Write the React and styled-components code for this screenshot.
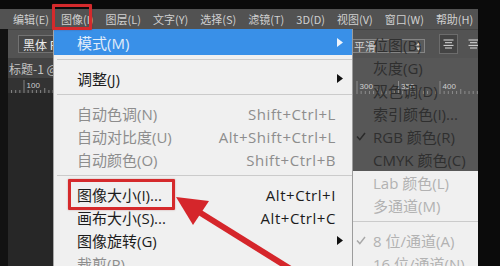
import React from 'react';
import styled, { createGlobalStyle } from 'styled-components';

const GlobalStyle = createGlobalStyle`
  html, body { margin: 0; padding: 0; background: #0b0b0b; }
  body { width: 500px; height: 266px; overflow: hidden; }
  #root { width: 500px; height: 266px; }
`;

const UI_FONT = `"Open Sans", "Noto Sans CJK SC", sans-serif`;
const CJK_FONT = `"Noto Sans CJK SC", sans-serif`;

const Screen = styled.div`
  position: relative;
  width: 500px;
  height: 266px;
  overflow: hidden;
  background: #0b0b0b;
  padding-top: 9px;
  box-sizing: border-box;
  font-family: ${UI_FONT};
`;

const Window = styled.div`
  width: 478px;
  height: 100%;
  display: flex;
  flex-direction: column;
  overflow: hidden;
`;

const MenuBar = styled.div`
  height: 20px;
  flex: none;
  display: flex;
  align-items: center;
  gap: 12px;
  padding-left: 13px;
  background: #525252;
  color: #d0d0d0;
  font-family: ${CJK_FONT};
  font-size: 11px;
  overflow: hidden;
`;

const MenuBarItem = styled.span`
  white-space: nowrap;
  flex: none;
`;

const Body = styled.div`
  flex: 1;
  display: flex;
  min-height: 0;
`;

const ToolStrip = styled.div`
  width: 8px;
  flex: none;
  background: #121212;
`;

const Main = styled.div`
  flex: 1;
  display: flex;
  flex-direction: column;
  min-width: 0;
`;

const OptionsBar = styled.div`
  height: 29px;
  flex: none;
  display: flex;
  align-items: center;
  padding-left: 10px;
  background: #535353;
  border-top: 1px solid #454545;
  box-sizing: border-box;
  overflow: hidden;
`;

const FontBox = styled.div`
  flex: none;
  width: 100px;
  height: 18px;
  box-sizing: border-box;
  border: 1px solid #727272;
  background: #474747;
  color: #ededed;
  font-family: ${CJK_FONT};
  font-size: 12px;
  display: flex;
  align-items: center;
  padding-left: 4px;
  white-space: nowrap;
`;

const SelectBox = styled.div`
  flex: none;
  margin-left: 227px;
  margin-top: 4px;
  width: 80px;
  height: 14px;
  box-sizing: border-box;
  border: 1px solid #858585;
  background: #5b5b5b;
  color: #d6d6d6;
  font-family: ${CJK_FONT};
  font-size: 11px;
  display: flex;
  align-items: center;
  justify-content: space-between;
  padding: 0 3px 0 8px;
`;

const AlignButton = styled.div`
  flex: none;
  margin-left: ${(p) => p.$gap}px;
  width: 19px;
  height: 20px;
  box-sizing: border-box;
  display: flex;
  align-items: center;
  justify-content: center;
  background: ${(p) => (p.$selected ? '#444444' : 'transparent')};
  border: 1px solid ${(p) => (p.$selected ? '#6c6c6c' : 'transparent')};
`;

const Workspace = styled.div`
  flex: 1;
  display: flex;
  min-height: 0;
`;

const DocArea = styled.div`
  flex: 1;
  display: flex;
  flex-direction: column;
  min-width: 0;
`;

const TabRow = styled.div`
  height: 20px;
  flex: none;
  display: flex;
  align-items: center;
  background: #434343;
  color: #c2c2c2;
  font-family: ${CJK_FONT};
  font-size: 12px;
  padding-left: 1px;
  white-space: nowrap;
  overflow: hidden;
`;

const RulerBar = styled.div`
  height: 15px;
  flex: none;
  background: #333333;
  display: flex;
`;

const CanvasArea = styled.div`
  flex: 1;
  background: #272727;
`;

const RightPanel = styled.div`
  width: 125px;
  flex: none;
  background: #575757;
  display: flex;
  flex-direction: column;
  padding-top: 21px;
  box-sizing: border-box;
`;

const Dropdown = styled.div`
  position: absolute;
  left: 53px;
  top: 29px;
  width: 300px;
  height: 250px;
  box-sizing: border-box;
  background: #f0f0f0;
  border-left: 1px solid #a6a6a6;
  border-right: 1px solid #9c9c9c;
  font-size: 15px;
`;

const TONES = {
  active: '#e2ecf9',
  normal: '#1c1c1c',
  disabled: '#8d8d8d',
};

const MenuRow = styled.div`
  display: flex;
  align-items: center;
  height: ${(p) => (p.$tall ? 26 : 23)}px;
  padding-left: 23px;
  color: ${(p) => TONES[p.$tone || 'normal']};
  background: ${(p) => (p.$tone === 'active' ? '#3990e8' : 'transparent')};
  white-space: nowrap;
`;

const Label = styled.span`
  flex: none;
`;

const Shortcut = styled.span`
  margin-left: auto;
  flex: none;
  letter-spacing: 0.55px;
`;

const ArrowSlot = styled.span`
  width: 16px;
  flex: none;
  display: flex;
  align-items: center;
  padding-left: 1px;
  box-sizing: border-box;
  ${(p) => (p.$push ? 'margin-left: auto;' : '')}
`;

const Separator = styled.div`
  height: 12px;
  box-sizing: border-box;
  padding: 4px 0 0 ${(p) => p.$inset}px;
  display: flex;
  flex-direction: column;
  &::before {
    content: '';
    height: 1px;
    background: #cbcbcb;
  }
`;

const Submenu = styled.div`
  position: absolute;
  left: 353px;
  top: 33px;
  width: 125px;
  font-size: 15px;
`;

const SubSection = styled.div`
  background: ${(p) => (p.$dim ? 'transparent' : '#f0f0f0')};
  color: ${(p) => (p.$dim ? '#2f2f2f' : '#b2b2b2')};
  padding-bottom: ${(p) => (p.$dim ? 0 : 20)}px;
`;

const SubRow = styled.div`
  display: flex;
  align-items: center;
  height: 23px;
  white-space: nowrap;
`;

const CheckSlot = styled.span`
  width: 20px;
  flex: none;
  display: flex;
  align-items: center;
  padding-left: 3px;
  box-sizing: border-box;
`;

const RedFrame = styled.div`
  position: absolute;
  left: ${(p) => p.$x}px;
  top: ${(p) => p.$y}px;
  width: ${(p) => p.$w}px;
  height: ${(p) => p.$h}px;
  box-sizing: border-box;
  border: 3px solid #d52a2c;
  border-radius: 1px;
  box-shadow: 0 0 2px rgba(120, 0, 0, 0.35);
  pointer-events: none;
`;

const ArrowOverlay = styled.svg`
  position: absolute;
  left: 0;
  top: 0;
  width: 500px;
  height: 266px;
  pointer-events: none;
`;

const TriRight = ({ color }) => (
  <svg width="6" height="9" viewBox="0 0 6 9">
    <polygon points="0,0 6,4.5 0,9" fill={color} />
  </svg>
);

const Check = ({ color }) => (
  <svg width="10" height="9" viewBox="0 0 10 9">
    <polyline points="1,4.6 3.8,7.6 9,1" fill="none" stroke={color} strokeWidth="1.5" />
  </svg>
);

const LinesIcon = () => (
  <svg width="11" height="10" viewBox="0 0 11 10">
    {[1, 3.7, 6.4, 9].map((y, i) => (
      <line key={i} x1={i % 2 ? 2 : 0.5} x2={i % 2 ? 9 : 10.5} y1={y} y2={y} stroke="#dcdcdc" strokeWidth="1" />
    ))}
  </svg>
);

const SpinIcon = () => (
  <svg width="5" height="9" viewBox="0 0 5 9">
    <polygon points="0,3.5 2.5,0.5 5,3.5" fill="#d8d8d8" />
    <polygon points="0,5.5 2.5,8.5 5,5.5" fill="#d8d8d8" />
  </svg>
);

const Ruler = ({ width, origin, labels, start }) => {
  const step = 4.15;
  const ticks = [];
  for (let i = -40; i < 120; i++) {
    const x = origin + i * step;
    if (x < 0 || x > width) continue;
    const major = i % 10 === 0;
    const half = i % 5 === 0;
    ticks.push(
      <line
        key={i}
        x1={x}
        x2={x}
        y1={major ? 2 : half ? 10 : 12}
        y2={15}
        stroke="#9a9a9a"
        strokeWidth="0.8"
      />
    );
  }
  return (
    <svg width={width} height="15" viewBox={`0 0 ${width} 15`}>
      {ticks}
      {labels.map((t, i) => (
        <text
          key={t}
          x={origin + i * 41.5 + 2.5}
          y="10"
          fontSize="8"
          fontFamily="'Liberation Sans', sans-serif"
          fill="#cfcfcf"
        >
          {start + i * 50}
        </text>
      ))}
    </svg>
  );
};

const menuBarItems = ['编辑(E)', '图像(I)', '图层(L)', '文字(Y)', '选择(S)', '滤镜(T)', '3D(D)', '视图(V)', '窗口(W)', '帮助(H)'];

export default function App() {
  return (
    <Screen>
      <GlobalStyle />
      <Window>
        <MenuBar>
          {menuBarItems.map((m) => (
            <MenuBarItem key={m}>{m}</MenuBarItem>
          ))}
        </MenuBar>
        <Body>
          <ToolStrip />
          <Main>
            <OptionsBar>
              <FontBox>黑体 Regular</FontBox>
              <SelectBox>
                <span>平滑</span>
                <SpinIcon />
              </SelectBox>
              <AlignButton $gap={14} $selected>
                <LinesIcon />
              </AlignButton>
              <AlignButton $gap={6}>
                <LinesIcon />
              </AlignButton>
            </OptionsBar>
            <Workspace>
              <DocArea>
                <TabRow>标题-1 @ 100% (RGB/8)</TabRow>
                <RulerBar>
                  <Ruler width={345} origin={16} labels={['100', '150']} start={100} />
                </RulerBar>
                <CanvasArea />
              </DocArea>
              <RightPanel>
                <Ruler width={125} origin={4} labels={['300', '350', '400']} start={300} />
              </RightPanel>
            </Workspace>
          </Main>
        </Body>
      </Window>

      <Dropdown>
        <MenuRow $tall $tone="active">
          <Label>模式(M)</Label>
          <ArrowSlot $push>
            <TriRight color="#eef4fc" />
          </ArrowSlot>
        </MenuRow>
        <Separator $inset={3} />
        <MenuRow>
          <Label>调整(J)</Label>
          <ArrowSlot $push>
            <TriRight color="#111" />
          </ArrowSlot>
        </MenuRow>
        <Separator $inset={3} />
        <MenuRow $tone="disabled">
          <Label>自动色调(N)</Label>
          <Shortcut>Shift+Ctrl+L</Shortcut>
          <ArrowSlot />
        </MenuRow>
        <MenuRow $tone="disabled">
          <Label>自动对比度(U)</Label>
          <Shortcut>Alt+Shift+Ctrl+L</Shortcut>
          <ArrowSlot />
        </MenuRow>
        <MenuRow $tone="disabled">
          <Label>自动颜色(O)</Label>
          <Shortcut>Shift+Ctrl+B</Shortcut>
          <ArrowSlot />
        </MenuRow>
        <Separator $inset={3} />
        <MenuRow>
          <Label>图像大小(I)...</Label>
          <Shortcut>Alt+Ctrl+I</Shortcut>
          <ArrowSlot />
        </MenuRow>
        <MenuRow>
          <Label>画布大小(S)...</Label>
          <Shortcut>Alt+Ctrl+C</Shortcut>
          <ArrowSlot />
        </MenuRow>
        <MenuRow>
          <Label>图像旋转(G)</Label>
          <ArrowSlot $push>
            <TriRight color="#111" />
          </ArrowSlot>
        </MenuRow>
        <MenuRow $tone="disabled">
          <Label>裁剪(P)</Label>
        </MenuRow>
      </Dropdown>

      <Submenu>
        <SubSection $dim>
          <SubRow><CheckSlot /><span>位图(B)</span></SubRow>
          <SubRow><CheckSlot /><span>灰度(G)</span></SubRow>
          <SubRow><CheckSlot /><span>双色调(D)</span></SubRow>
          <SubRow><CheckSlot /><span>索引颜色(I)...</span></SubRow>
          <SubRow><CheckSlot><Check color="#2a2a2a" /></CheckSlot><span>RGB 颜色(R)</span></SubRow>
          <SubRow><CheckSlot /><span>CMYK 颜色(C)</span></SubRow>
        </SubSection>
        <SubSection>
          <SubRow><CheckSlot /><span>Lab 颜色(L)</span></SubRow>
          <SubRow><CheckSlot /><span>多通道(M)</span></SubRow>
          <Separator $inset={0} />
          <SubRow><CheckSlot><Check color="#a8a8a8" /></CheckSlot><span>8 位/通道(A)</span></SubRow>
          <SubRow><CheckSlot /><span>16 位/通道(N)</span></SubRow>
        </SubSection>
      </Submenu>

      <RedFrame $x={52} $y={4} $w={40} $h={26} />
      <RedFrame $x={68} $y={179} $w={107} $h={31} />

      <ArrowOverlay viewBox="0 0 500 266">
        <line x1="199" y1="212" x2="305" y2="278" stroke="#d5262b" strokeWidth="6" />
        <polygon points="176,197 193,225 209,201" fill="#d5262b" />
      </ArrowOverlay>
    </Screen>
  );
}
